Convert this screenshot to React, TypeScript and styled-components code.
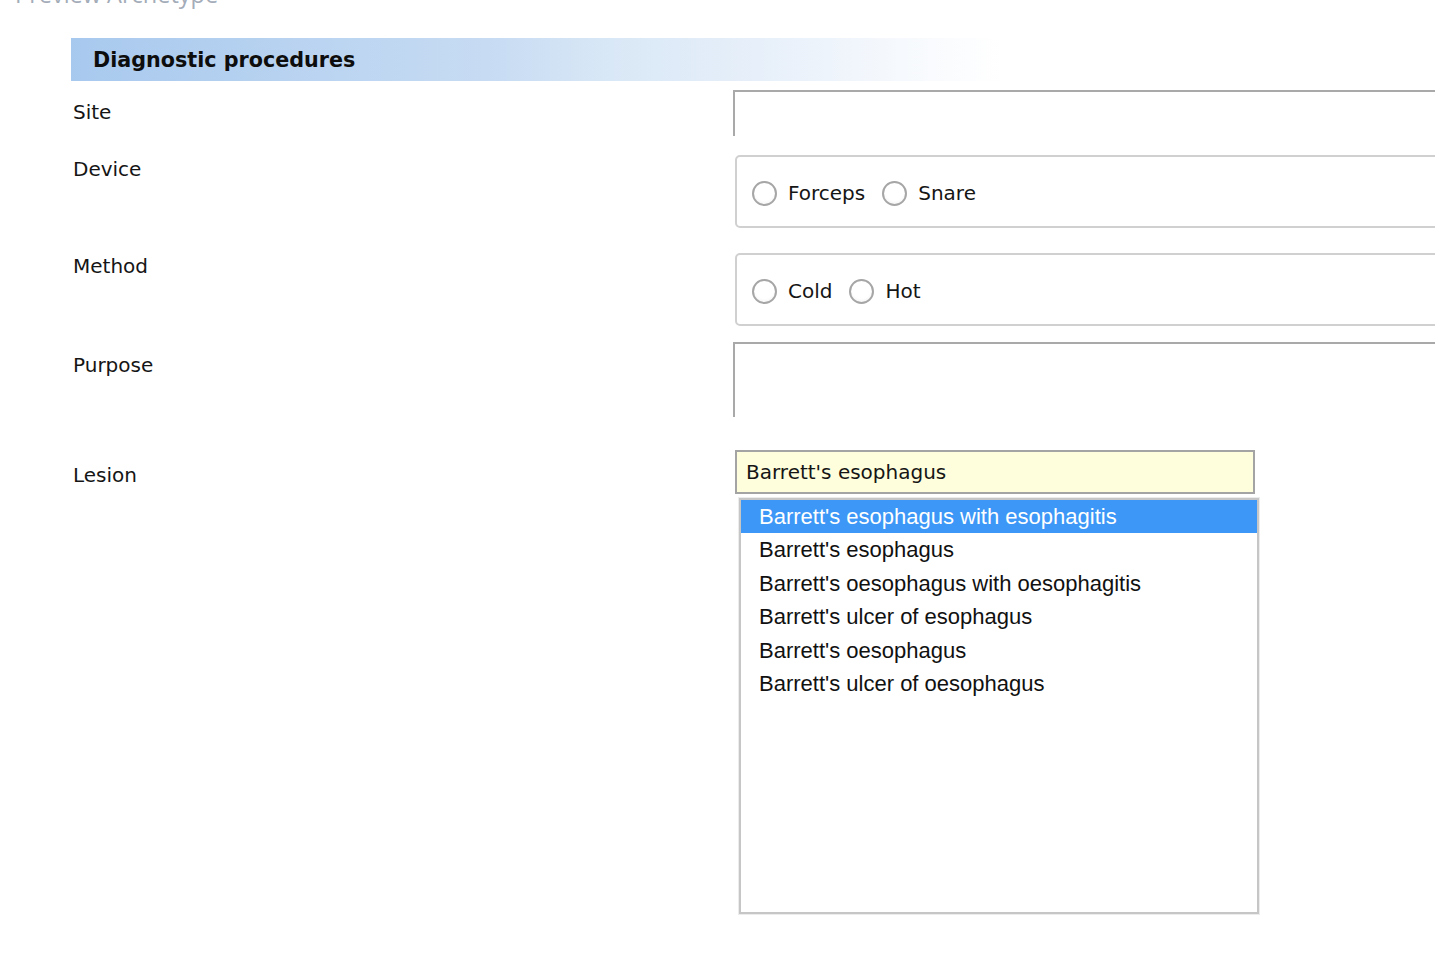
import styled, { createGlobalStyle } from 'styled-components';

const GlobalStyle = createGlobalStyle`
	html, body {
		margin: 0;
		padding: 0;
		background: #ffffff;
	}
	body {
		font-family: 'DejaVu Sans', 'Liberation Sans', sans-serif;
		color: #161616;
		overflow: hidden;
	}
`;

const Page = styled.div`
	width: 1435px;
	height: 957px;
	overflow: hidden;
	position: relative;
`;

// the window title is scrolled mostly out of view in the reference
const Title = styled.div`
	margin: -18px 0 0 15px;
	height: 24px;
	line-height: 24px;
	font-family: 'Open Sans', 'Liberation Sans', sans-serif;
	font-size: 23.5px;
	color: #a3acb8;
	white-space: nowrap;
`;

const SectionHeader = styled.div`
	margin: 32px 0 0 71px;
	height: 43px;
	line-height: 45px;
	padding-left: 22px;
	font-size: 20.7px;
	font-weight: bold;
	color: #0d0d0d;
	background: linear-gradient(
		to right,
		#a8c9ee 0px,
		#c8dcf3 430px,
		#d8e7f6 530px,
		#e8f0fa 700px,
		#f6f9fd 830px,
		#ffffff 930px
	);
`;

const FormRow = styled.div<{ $mt: number }>`
	display: grid;
	grid-template-columns: 660px 760px;
	padding-left: 73px;
	margin-top: ${(p) => p.$mt}px;
	align-items: start;
`;

const Label = styled.div<{ $pad: number }>`
	padding-top: ${(p) => p.$pad}px;
	line-height: 24px;
	font-size: 20px;
	color: #151515;
`;

const FieldCell = styled.div<{ $shift?: number }>`
	position: relative;
	margin-left: ${(p) => p.$shift ?? 0}px;
`;

const TextArea = styled.div<{ $h: number }>`
	height: ${(p) => p.$h}px;
	box-sizing: border-box;
	border-top: 2px solid #a9a9a9;
	border-left: 2px solid #a9a9a9;
	background: #ffffff;
`;

const GroupBox = styled.div`
	height: 73px;
	box-sizing: border-box;
	border: 2px solid #d0d0d0;
	border-radius: 5px;
	display: flex;
	align-items: center;
	padding: 3px 0 0 15px;
	gap: 17px;
`;

const RadioOption = styled.label`
	display: flex;
	align-items: center;
	gap: 11px;
	font-size: 20px;
	color: #151515;
`;

const RadioCircle = styled.span`
	width: 25px;
	height: 25px;
	box-sizing: border-box;
	border-radius: 50%;
	border: 2px solid #a6a6a6;
	background: radial-gradient(circle at 50% 40%, #ffffff 55%, #ececec 100%);
`;

const ComboInput = styled.div`
	width: 520px;
	height: 44px;
	box-sizing: border-box;
	border: 2px solid #a4a4a4;
	background: #fefedc;
	padding-left: 9px;
	line-height: 40px;
	font-size: 20px;
	color: #151515;
`;

const SuggestList = styled.ul`
	position: absolute;
	top: 48px;
	left: 4px;
	width: 520px;
	height: 416px;
	box-sizing: border-box;
	margin: 0;
	padding: 0;
	list-style: none;
	background: #ffffff;
	border: 2px solid #c6c6c6;
	box-shadow: 0 0 0 1px #ececec;
	font-family: 'Liberation Sans', Arial, sans-serif;
	font-size: 22px;
`;

const SuggestItem = styled.li<{ $active?: boolean }>`
	height: 33.4px;
	line-height: 33.4px;
	padding-left: 18px;
	white-space: nowrap;
	color: ${(p) => (p.$active ? '#ffffff' : '#111111')};
	background: ${(p) => (p.$active ? '#3c97f7' : 'transparent')};
`;

const suggestions = [
	"Barrett's esophagus with esophagitis",
	"Barrett's esophagus",
	"Barrett's oesophagus with oesophagitis",
	"Barrett's ulcer of esophagus",
	"Barrett's oesophagus",
	"Barrett's ulcer of oesophagus",
];

const Radio = ({ label }: { label: string }) => (
	<RadioOption>
		<RadioCircle />
		{label}
	</RadioOption>
);

const App = () => {
	return (
		<Page>
			<GlobalStyle />
			<Title>Preview Archetype</Title>
			<SectionHeader>Diagnostic procedures</SectionHeader>

			<FormRow $mt={9}>
				<Label $pad={10}>Site</Label>
				<FieldCell>
					<TextArea $h={46} />
				</FieldCell>
			</FormRow>

			<FormRow $mt={19}>
				<Label $pad={2}>Device</Label>
				<FieldCell $shift={2}>
					<GroupBox>
						<Radio label='Forceps' />
						<Radio label='Snare' />
					</GroupBox>
				</FieldCell>
			</FormRow>

			<FormRow $mt={25}>
				<Label $pad={1}>Method</Label>
				<FieldCell $shift={2}>
					<GroupBox>
						<Radio label='Cold' />
						<Radio label='Hot' />
					</GroupBox>
				</FieldCell>
			</FormRow>

			<FormRow $mt={16}>
				<Label $pad={11}>Purpose</Label>
				<FieldCell>
					<TextArea $h={75} />
				</FieldCell>
			</FormRow>

			<FormRow $mt={33}>
				<Label $pad={13}>Lesion</Label>
				<FieldCell $shift={2}>
					<ComboInput>Barrett's esophagus</ComboInput>
					<SuggestList>
						{suggestions.map((s, i) => (
							<SuggestItem key={s} $active={i === 0}>
								{s}
							</SuggestItem>
						))}
					</SuggestList>
				</FieldCell>
			</FormRow>
		</Page>
	);
};

export default App;
